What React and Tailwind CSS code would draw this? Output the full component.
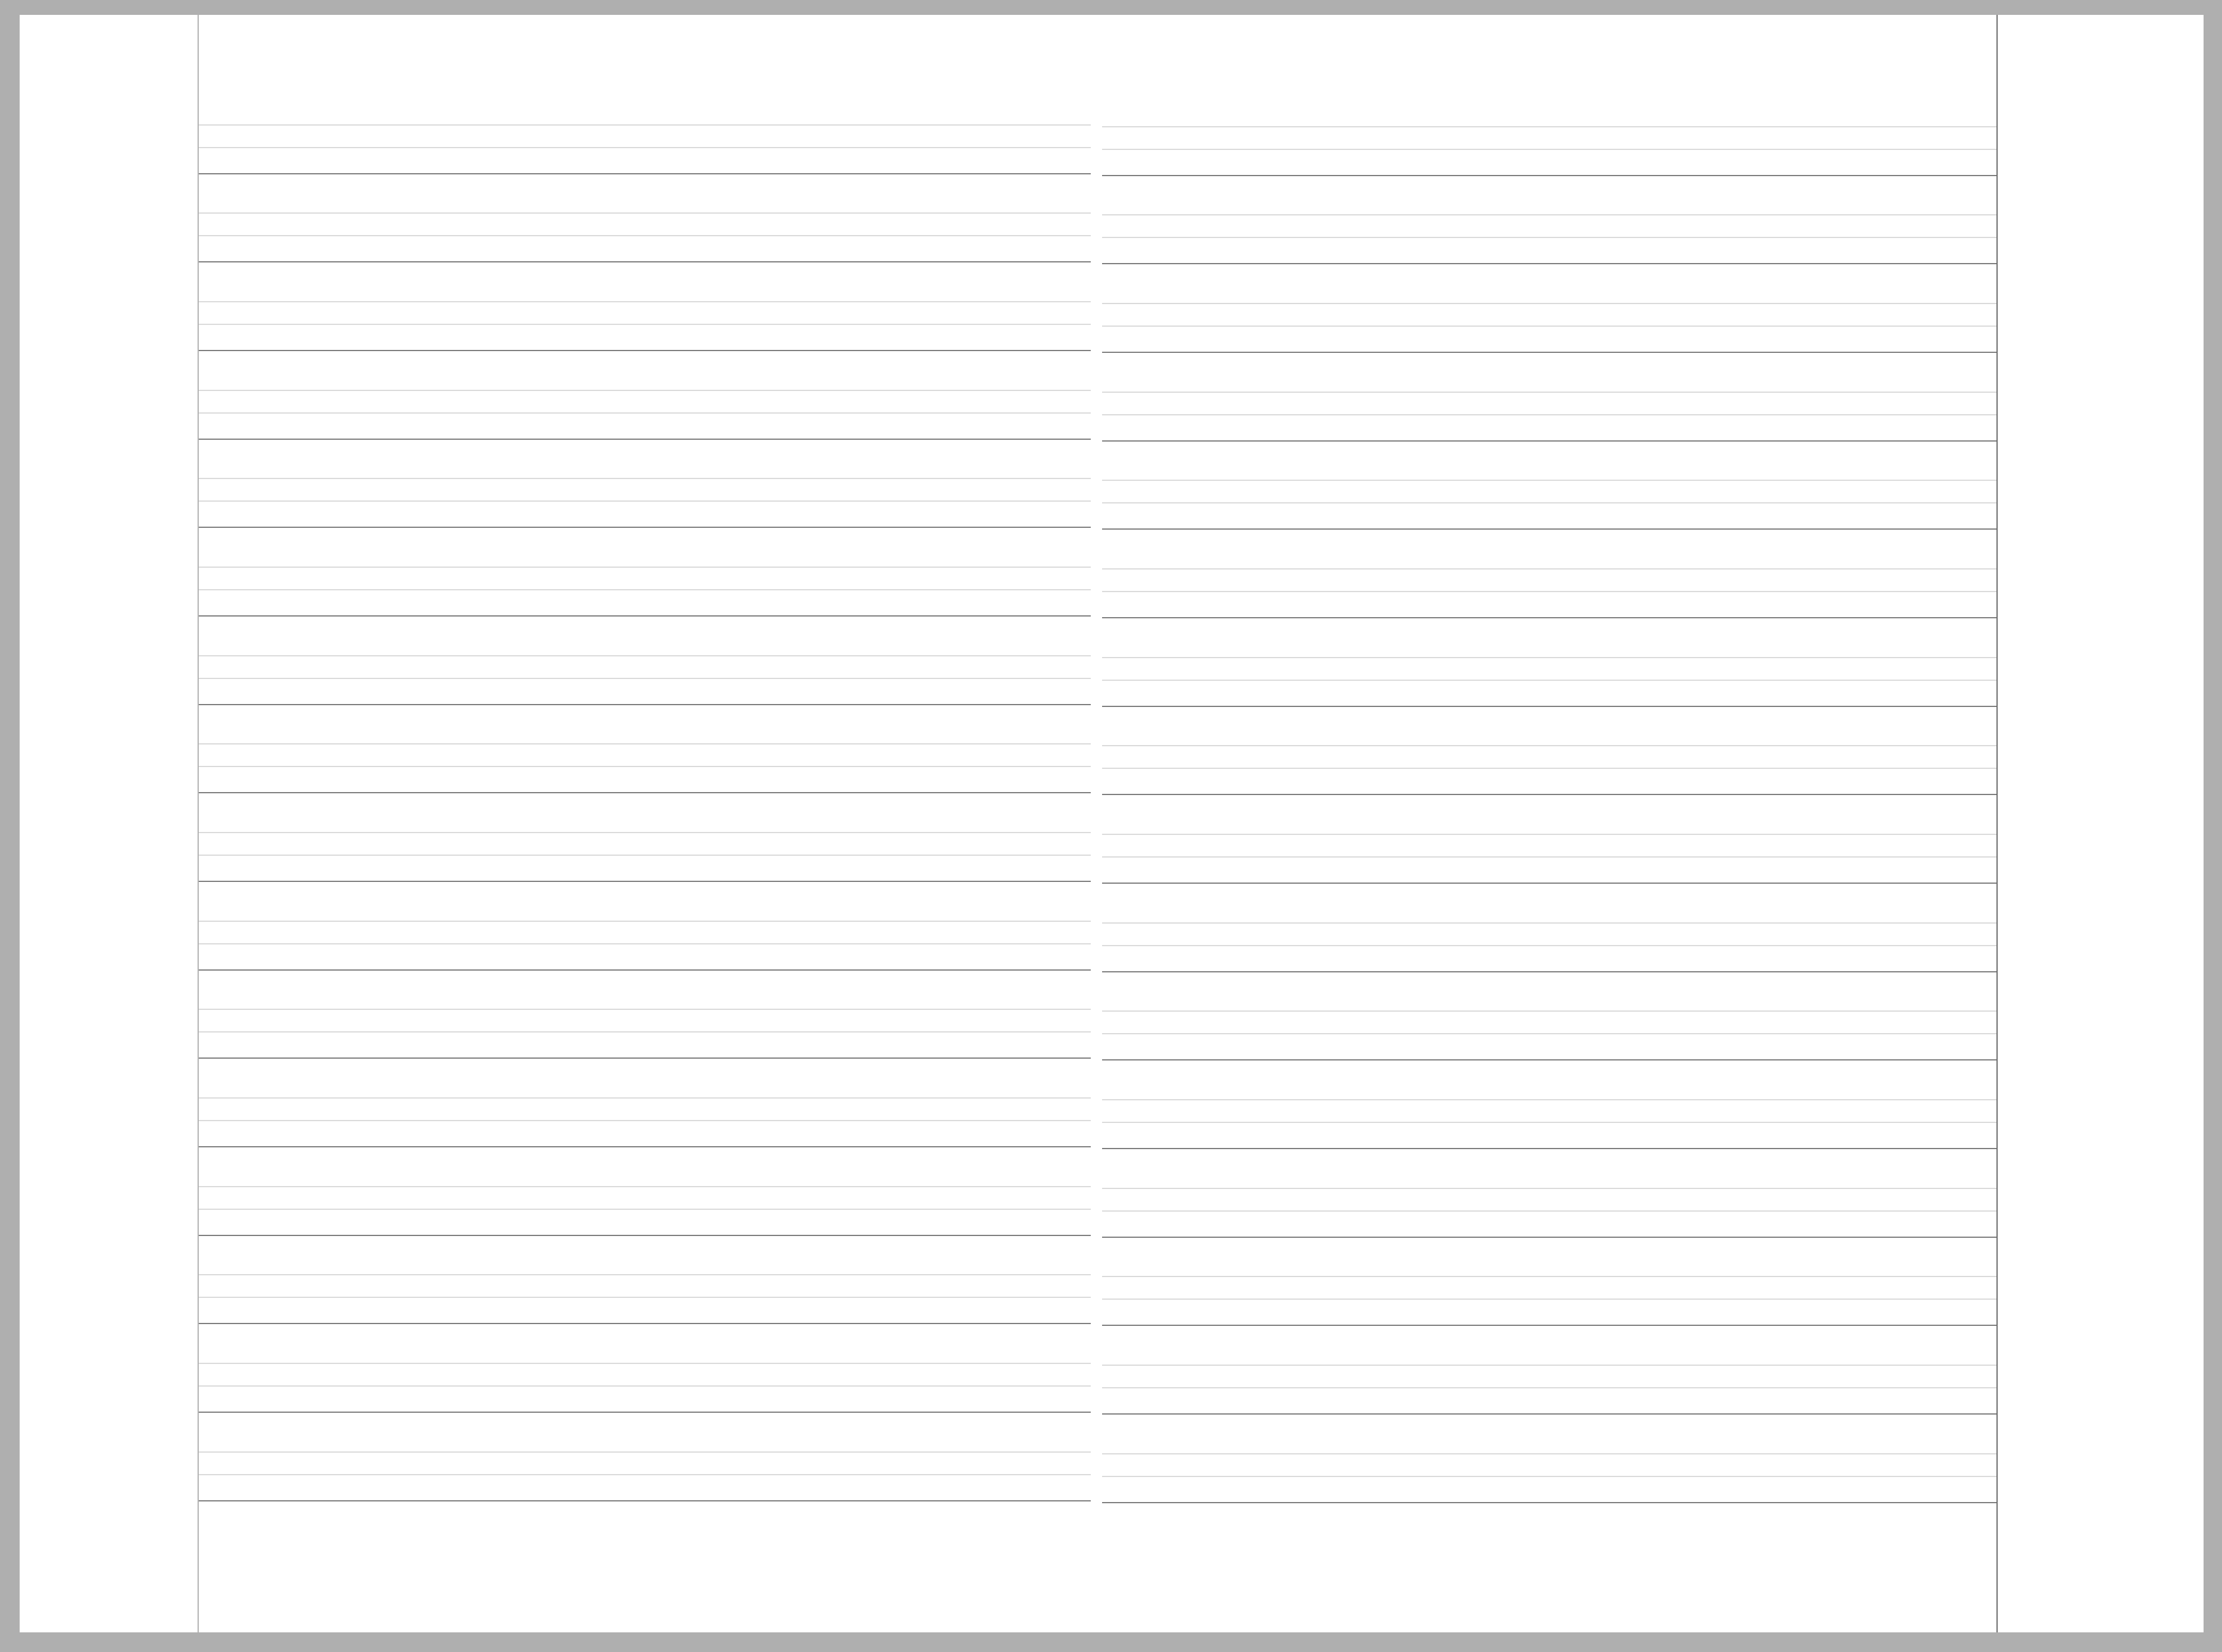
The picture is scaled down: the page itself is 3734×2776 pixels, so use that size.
import React from "react";

const groups = Array.from({ length: 16 }, (_, i) => i);

function Column({ offset }) {
  return (
    <div className={offset ? "flex flex-col pt-[3px]" : "flex flex-col"}>
      {groups.map((i) => (
        <div key={i} className={i % 3 === 0 ? "flex h-[148px] flex-col" : "flex h-[149px] flex-col"}>
          <div className="h-[2px] bg-[#dadada]" />
          <div className="h-[36px]" />
          <div className="h-[2px] bg-[#dadada]" />
          <div className="h-[42px]" />
          <div className="h-[2px] bg-[#7c7c7c]" />
        </div>
      ))}
    </div>
  );
}

export default function App() {
  return (
    <div className="flex h-[2776px] w-[3734px] bg-[#afafaf] pt-[25px] pl-[33px] pr-[31px] pb-[33px]">
      <div className="flex flex-1 bg-white">
        <div className="w-[299px] shrink-0" />
        <div className="w-[2px] shrink-0 bg-[#b2b2b2]" />
        <div className="grid w-[3021px] shrink-0 grid-cols-[1499px_1503px] gap-x-[19px] pt-[184px]">
          <Column offset={false} />
          <Column offset={true} />
        </div>
        <div className="w-[2px] shrink-0 bg-[#6c6c6c]" />
        <div className="flex-1" />
      </div>
    </div>
  );
}
